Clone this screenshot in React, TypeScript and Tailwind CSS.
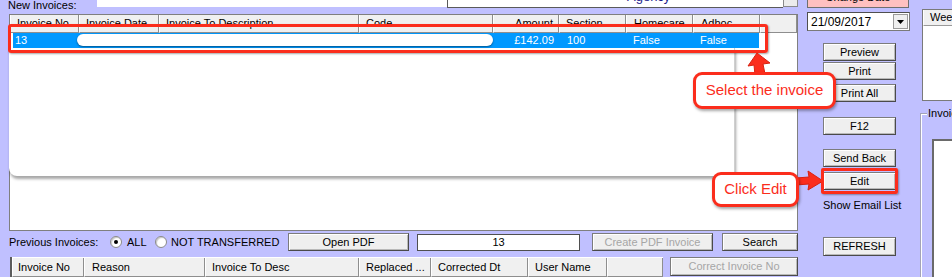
import React from 'react';

const RED = 'border-[#fb2d1c]';

const Btn = ({
  children,
  className = '',
  disabled = false,
}: {
  children: React.ReactNode;
  className?: string;
  disabled?: boolean;
}) => (
  <div
    className={`flex items-center justify-center shrink-0 bg-[#efefef] border border-[#7c7c7c] border-b-[#4a4a4a] border-r-[#4a4a4a] shadow-[inset_1px_1px_0_#ffffff,inset_-1px_-1px_0_#b9b9b9] leading-none ${
      disabled ? 'text-[#a6a6a6]' : 'text-black'
    } ${className}`}
  >
    {children}
  </div>
);

const Th = ({ children, className = '' }: { children?: React.ReactNode; className?: string }) => (
  <div
    className={`h-full shrink-0 flex items-center bg-[#f0f0f0] border-l border-l-white border-r border-r-[#8e8e8e] border-b border-b-[#8e8e8e] whitespace-nowrap overflow-hidden ${className}`}
  >
    {children}
  </div>
);

const Radio = ({ checked }: { checked?: boolean }) => (
  <div className="w-[12px] h-[12px] shrink-0 rounded-full bg-white border border-[#8a8a8a] flex items-center justify-center shadow-[inset_1px_1px_1px_#c8c8c8]">
    {checked && <div className="w-[4px] h-[4px] rounded-full bg-black" />}
  </div>
);

export default function App() {
  return (
    <div className="relative w-[952px] h-[277px] overflow-hidden bg-[#c0c0ff] flex font-['Liberation_Sans',Arial,sans-serif] text-[11px] text-black">
      {/* left: invoice lists */}
      <div className="w-[798px] shrink-0 flex flex-col">
        <div className="h-[14px] flex items-start">
          <div className="w-[97px] pl-[8px] -mt-[1px] leading-[13px]">New Invoices:</div>
          <div className="w-[350px] h-[7px] bg-white" />
          <div className="w-[336px] h-[8px] bg-white border-l border-b border-[#5a5a5a] overflow-hidden">
            <div className="pl-[179px] -mt-[11px] text-[13px] leading-[15px] text-[#1c1c8c]">Agency</div>
          </div>
          <div className="w-[15px] h-[7px] bg-[#ececec] border border-t-0 border-[#8a8a8a]" />
        </div>

        {/* new invoices grid */}
        <div className="ml-[9px] w-[789px] h-[221px] bg-white border border-[#7f7f7f] flex flex-col">
          <div className="h-[18px] flex">
            <Th className="w-[69px] pl-[6px]">Invoice No</Th>
            <Th className="w-[80px] pl-[6px]">Invoice Date</Th>
            <Th className="w-[200px] pl-[6px]">Invoice To Description</Th>
            <Th className="w-[134px] pl-[6px]">Code</Th>
            <Th className="w-[66px] justify-end pr-[5px]">Amount</Th>
            <Th className="w-[67px] pl-[6px]">Section</Th>
            <Th className="w-[67px] pl-[7px]">Homecare</Th>
            <Th className="w-[67px] pl-[7px]">Adhoc</Th>
            <Th className="flex-1" />
          </div>
          <div className="h-[15px] flex items-center text-white leading-none">
            <div className="w-[3px] h-full bg-white" />
            <div className="w-[746px] h-full bg-[#0099ff] flex items-center">
              <div className="w-[66px] pl-[2px]">13</div>
              <div className="w-[80px]" />
              <div className="w-[200px]" />
              <div className="w-[134px]" />
              <div className="w-[66px] text-right pr-[5px]">£142.09</div>
              <div className="w-[67px] pl-[8px]">100</div>
              <div className="w-[67px] pl-[7px]">False</div>
              <div className="w-[66px] pl-[7px]">False</div>
            </div>
          </div>
        </div>

        {/* previous invoices controls */}
        <div className="mt-[2px] h-[18px] flex items-center">
          <div className="w-[110px] pl-[9px] whitespace-nowrap">Previous Invoices:</div>
          <Radio checked />
          <div className="w-[33px] pl-[5px]">ALL</div>
          <Radio />
          <div className="w-[121px] pl-[4px] whitespace-nowrap">NOT TRANSFERRED</div>
          <Btn className="w-[121px] h-[18px]">Open PDF</Btn>
          <div className="ml-[8px] w-[163px] h-[17px] bg-white border border-[#4f4f4f] flex items-center justify-center">13</div>
          <Btn disabled className="ml-[12px] w-[121px] h-[18px]">
            Create PDF Invoice
          </Btn>
          <Btn className="ml-[9px] w-[76px] h-[18px]">Search</Btn>
        </div>

        {/* previous invoices grid */}
        <div className="mt-[6px] flex items-start">
          <div className="ml-[10px] h-[20px] flex border-l-2 border-[#5c5c5c] bg-white pt-[1px]">
            <Th className="w-[72px] pl-[5px]">Invoice No</Th>
            <Th className="w-[121px] pl-[7px]">Reason</Th>
            <Th className="w-[154px] pl-[6px]">Invoice To Desc</Th>
            <Th className="w-[72px] pl-[6px]">Replaced ...</Th>
            <Th className="w-[97px] pl-[6px]">Corrected Dt</Th>
            <Th className="w-[79px] pl-[6px]">User Name</Th>
            <Th className="w-[56px] border-l-[#5c5c5c]" />
          </div>
          <Btn disabled className="ml-[7px] w-[128px] h-[19px]">
            Correct Invoice No
          </Btn>
        </div>
      </div>

      {/* middle: action buttons */}
      <div className="w-[122px] shrink-0 flex flex-col">
        <div className="ml-[9px] w-[102px] h-[8px] overflow-hidden bg-[#ffc0c0] border border-t-0 border-[#6f6f6f]">
          <div className="-mt-[11px] h-[16px] flex items-center justify-center">Change Date</div>
        </div>
        <div className="ml-[9px] mt-[4px] w-[103px] h-[19px] bg-white border border-[#7a7a7a] border-t-[#4f4f4f] border-l-[#4f4f4f] flex items-center">
          <div className="pl-[3px] text-[12px] leading-none">21/09/2017</div>
          <div className="ml-auto mr-[1px] w-[15px] h-[15px] bg-[#efefef] border border-[#9a9a9a] flex items-center justify-center">
            <svg width="7" height="4" viewBox="0 0 7 4">
              <path d="M0 0h7L3.5 4z" fill="#000" />
            </svg>
          </div>
        </div>
        <div className="ml-[25px] w-[73px] flex flex-col">
          <Btn className="mt-[12px] h-[18px]">Preview</Btn>
          <Btn className="mt-[1px] h-[18px]">Print</Btn>
          <Btn className="mt-[4px] h-[18px]">Print All</Btn>
          <Btn className="mt-[15px] h-[18px]">F12</Btn>
          <Btn className="mt-[14px] h-[18px]">Send Back</Btn>
          <Btn className="mt-[5px] h-[18px]">Edit</Btn>
          <div className="mt-[9px] leading-[13px] text-center whitespace-nowrap">Show Email List</div>
          <Btn className="mt-[25px] h-[19px]">REFRESH</Btn>
        </div>
      </div>

      {/* right: side panels */}
      <div className="w-[32px] shrink-0 flex flex-col">
        <div className="ml-[2px] mt-[9px] h-[92px] bg-white border-l border-t border-b border-[#7a7a7a] flex flex-col">
          <div className="h-[16px] bg-[#f0f0f0] border-b border-[#9a9a9a] border-l border-l-white pl-[6px] flex items-center overflow-hidden whitespace-nowrap">
            Weekly
          </div>
        </div>
        <div className="mt-[12px] flex-1 border-l border-t border-[#a3a3b8] shadow-[inset_1px_1px_0_#ffffff] flex flex-col">
          <div className="-mt-[7px] ml-[6px] w-fit bg-[#c0c0ff] px-[1px] leading-[13px] whitespace-nowrap">Invoice</div>
          <div className="ml-[11px] mt-[19px] flex-1 bg-white border-l-2 border-t-2 border-[#6a6a6a]" />
        </div>
      </div>

      {/* annotation overlays */}
      <div className="absolute left-[9px] top-[48px] w-[726px] h-[128px] bg-white rounded-bl-[8px] rounded-br-[3px] border-r border-[#cfcfcf] shadow-[1px_3px_3px_rgba(0,0,0,0.35)]" />
      <div className="absolute left-[77px] top-[34px] w-[416px] h-[12px] bg-white rounded-[6px] shadow-[0_1px_2px_rgba(0,0,0,0.45)]" />
      <div className={`absolute left-[8px] top-[24px] w-[760px] h-[29px] border-[3px] ${RED} rounded-[3px] shadow-[1px_1px_2px_rgba(0,0,0,0.35)]`} />

      <svg className="absolute left-[744px] top-[50px]" width="32" height="26" viewBox="0 0 32 26">
        <path d="M13 3 L4 16 L10 15 L11 25 L21 24 L19 14 L26 13 Z" fill="#fb2d1c" stroke="#d8200f" strokeWidth="1" strokeLinejoin="round" />
      </svg>
      <div className={`absolute left-[693px] top-[72px] w-[143px] h-[37px] rounded-[9px] border-[3px] ${RED} bg-white text-[#fb2d1c] text-[15px] flex items-center justify-center whitespace-nowrap shadow-[1px_2px_3px_rgba(0,0,0,0.35)]`}>
        Select the invoice
      </div>

      <svg className="absolute left-[795px] top-[169px]" width="30" height="24" viewBox="0 0 30 24">
        <path d="M1 9 L14 8 L13 2 L28 12 L13 21 L14 15 L1 16 Z" fill="#fb2d1c" stroke="#d8200f" strokeWidth="1" strokeLinejoin="round" />
      </svg>
      <div className={`absolute left-[712px] top-[172px] w-[87px] h-[35px] rounded-[9px] border-[3px] ${RED} bg-white text-[#fb2d1c] text-[15px] flex items-center justify-center whitespace-nowrap shadow-[1px_2px_3px_rgba(0,0,0,0.35)]`}>
        Click Edit
      </div>
      <div className={`absolute left-[821px] top-[168px] w-[77px] h-[26px] border-[3px] ${RED} rounded-[2px] shadow-[1px_1px_2px_rgba(0,0,0,0.35)]`} />
    </div>
  );
}
